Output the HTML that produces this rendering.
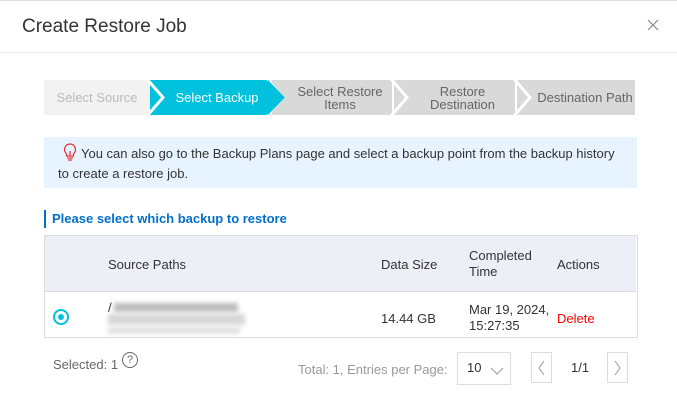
<!DOCTYPE html><html><head><style>
body{margin:0;width:677px;height:412px;background:#fff;font-family:"Liberation Sans",sans-serif;position:relative;overflow:hidden;color:#333}
.a{position:absolute}
.step{position:absolute;top:80px;height:35px;display:flex;align-items:center;justify-content:center;text-align:center;font-size:13px;line-height:13px;color:#666;background:#d9d9d9}
.tbl{border:1px solid #ddd}
</style></head><body>
<div class="a" style="left:0;top:0;width:677px;height:1px;background:#ddd"></div>
<div class="a" style="left:22px;top:16px;font-size:19px;color:#333">Create Restore Job</div>
<svg class="a" style="left:647px;top:19px" width="12" height="12"><path d="M1 1L11 11M11 1L1 11" stroke="#888" stroke-width="1.2"/></svg>
<div class="a" style="left:0;top:52px;width:677px;height:1px;background:#e8e8e8"></div>

<div class="step" style="left:44px;width:106px;background:#f2f2f2;color:#bbb">Select Source</div>
<div class="step" style="left:150px;width:120px;background:#00c1de;color:#fff;padding-left:14px;box-sizing:border-box">Select Backup</div>
<div class="step" style="left:272px;width:120px;padding-left:16px;box-sizing:border-box">Select Restore<br>Items</div>
<div class="step" style="left:394px;width:121px;padding-left:16px;box-sizing:border-box">Restore<br>Destination</div>
<div class="step" style="left:517px;width:118px;padding-left:18px;box-sizing:border-box">Destination Path</div>
<svg class="a" style="left:0;top:80px" width="677" height="35">
<polyline points="147,-1 163,17.5 147,36" fill="none" stroke="#fff" stroke-width="3"/>
<polyline points="266,-2 284,17.5 266,37" fill="none" stroke="#fff" stroke-width="2"/>
<polygon points="268,0 285,17.5 268,35" fill="#00c1de"/>
<polyline points="391,-1 407,17.5 391,36" fill="none" stroke="#fff" stroke-width="3"/>
<polyline points="514,-1 530,17.5 514,36" fill="none" stroke="#fff" stroke-width="3"/>
</svg>

<div class="a" style="left:44px;top:137px;width:593px;height:51px;background:#e7f3fe"></div>
<svg class="a" style="left:62px;top:142px" width="16" height="20"><path d="M8 2a5.5 5.5 0 0 0-3.5 9.7V14h7v-2.3A5.5 5.5 0 0 0 8 2zM5 16h6M6 18h4M8 9v5" fill="none" stroke="#e4393c" stroke-width="1.3"/></svg>
<div class="a" style="left:81px;top:146px;font-size:13px;color:#333">You can also go to the Backup Plans page and select a backup point from the backup history</div>
<div class="a" style="left:58px;top:166px;font-size:13px;color:#333">to create a restore job.</div>

<div class="a" style="left:44px;top:210px;width:2px;height:18px;background:#0070cc"></div>
<div class="a" style="left:52px;top:211px;font-size:13px;font-weight:bold;color:#0070cc">Please select which backup to restore</div>

<div class="a tbl" style="left:44px;top:235px;width:592px;height:101px"></div>
<div class="a" style="left:45px;top:236px;width:591px;height:55px;background:#eceff5;border-bottom:1px solid #ddd"></div>
<div class="a" style="left:108px;top:257px;font-size:13px">Source Paths</div>
<div class="a" style="left:381px;top:257px;font-size:13px">Data Size</div>
<div class="a" style="left:469px;top:248px;font-size:13px;line-height:16px">Completed<br>Time</div>
<div class="a" style="left:557px;top:257px;font-size:13px">Actions</div>
<div class="a" style="left:53px;top:309px;width:12px;height:12px;border:2px solid #00c1de;border-radius:50%"></div>
<div class="a" style="left:58px;top:314px;width:6px;height:6px;background:#00c1de;border-radius:50%"></div>
<div class="a" style="left:108px;top:300px;font-size:13px">/</div>
<div class="a" style="left:114px;top:303px;width:124px;height:9px;background:#bbb;filter:blur(2.5px)"></div>
<div class="a" style="left:108px;top:314px;width:137px;height:11px;background:#d6d6d6;filter:blur(2.5px)"></div>
<div class="a" style="left:108px;top:327px;width:132px;height:7px;background:#e2e2e2;filter:blur(2px)"></div>
<div class="a" style="left:381px;top:311px;font-size:13px">14.44 GB</div>
<div class="a" style="left:469px;top:302px;font-size:13px;line-height:16px">Mar 19, 2024,<br>15:27:35</div>
<div class="a" style="left:557px;top:311px;font-size:13px;color:#f00">Delete</div>

<div class="a" style="left:53px;top:357px;font-size:13px;color:#666">Selected: 1</div>
<div class="a" style="left:122px;top:352px;width:14px;height:14px;border:1px solid #666;border-radius:50%;font-size:11px;text-align:center;line-height:14px;color:#666">?</div>
<div class="a" style="left:298px;top:362px;font-size:13px;color:#999">Total: 1, Entries per Page:</div>
<div class="a" style="left:457px;top:352px;width:54px;height:33px;border:1px solid #ddd;box-sizing:border-box"></div>
<div class="a" style="left:467px;top:360px;font-size:13px">10</div>
<svg class="a" style="left:490px;top:366px" width="14" height="10"><polyline points="1,2 7,8 13,2" fill="none" stroke="#999"/></svg>
<div class="a" style="left:531px;top:352px;width:21px;height:31px;border:1px solid #ddd;box-sizing:border-box"></div>
<svg class="a" style="left:537px;top:360px" width="10" height="16"><polyline points="7,1 2,8 7,15" fill="none" stroke="#999"/></svg>
<div class="a" style="left:571px;top:360px;font-size:13px">1/1</div>
<div class="a" style="left:607px;top:352px;width:21px;height:31px;border:1px solid #ddd;box-sizing:border-box"></div>
<svg class="a" style="left:613px;top:360px" width="10" height="16"><polyline points="2,1 7,8 2,15" fill="none" stroke="#999"/></svg>
</body></html>
